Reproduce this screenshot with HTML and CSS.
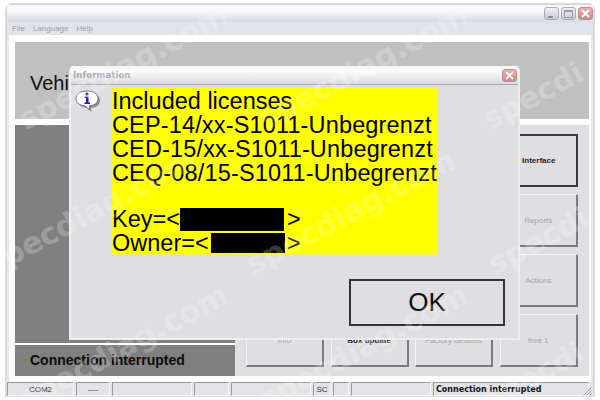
FILE: index.html
```html
<!DOCTYPE html>
<html>
<head>
  <title>Information</title>
  <link rel="stylesheet" href="styles.css">
</head>
<body>
  <div class="window">
    <div class="titlebar">
      <span class="winbtn">
        <svg width="13" height="11" viewBox="0 0 13 11"><rect x="3" y="8" width="5" height="2" fill="#8a8d98"/></svg>
      </span>
      <span class="winbtn">
        <svg width="13" height="11" viewBox="0 0 13 11"><rect x="2.500" y="2.500" width="8" height="7" fill="none" stroke="#9a9da8"/><rect x="2" y="2" width="9" height="2" fill="#9a9da8"/></svg>
      </span>
      <span class="winbtn close">
        <svg width="13" height="11" viewBox="0 0 13 11"><path d="M3 2l7 7M10 2l-7 7" stroke="#fff" stroke-width="1.800"/></svg>
      </span>
    </div>

    <div class="menubar">
      <span>File</span>
      <span>Language</span>
      <span>Help</span>
    </div>

    <div class="content">
      <div class="top-panel">Vehicle</div>
      <div class="lower">
        <div class="left-col">
          <div class="dark-panel"></div>
          <div class="conn-panel">Connection interrupted</div>
        </div>
        <div class="buttons">
          <div class="btn side active">Interface</div>
          <div class="btn side">Reports</div>
          <div class="btn side">Actions</div>
          <div class="btn">Info</div>
          <div class="btn strong">Box update</div>
          <div class="btn">Factory defaults</div>
          <div class="btn">free 1</div>
        </div>
      </div>
    </div>

    <div class="statusbar">
      <span class="cell c1">COM2</span>
      <span class="cell c2">----</span>
      <span class="cell c3"></span>
      <span class="cell c4"></span>
      <span class="cell c5"></span>
      <span class="cell c6">SC</span>
      <span class="cell c7"></span>
      <span class="cell c8"></span>
      <span class="cell c9">Connection interrupted</span>
      <svg class="grip" width="10" height="10" viewBox="0 0 10 10"><path d="M9.500 1.500l-8 8M9.500 4.500l-5 5M9.500 7.500l-2 2" stroke="#a0a0a6"/></svg>
    </div>
  </div>

  <!-- Dialog -->
  <div class="dialog">
    <div class="dialog-title">
      <span class="dialog-name">Information</span>
      <span class="winbtn close">
        <svg width="13" height="11" viewBox="0 0 13 11"><path d="M3 2l7 7M10 2l-7 7" stroke="#fff" stroke-width="1.800"/></svg>
      </span>
    </div>
    <div class="dialog-body">
      <svg class="info-icon" width="26" height="24" viewBox="0 0 26 24">
        <path d="M13 2c6.500 0 11 2.800 11 7.500s-4 7-8.500 7.300l-.5 4-4-4c-5.500-.4-9-3-9-7.300C2 4.800 6.500 2 13 2z" fill="#8d8d96" transform="translate(1 1)"/>
        <path d="M12 1c6.500 0 11 2.800 11 7.500s-4 7-8.500 7.300l-.5 4-4-4c-5.500-.4-9-3-9-7.300C1 3.800 5.500 1 12 1z" fill="#fff" stroke="#55586a" stroke-width=".8"/>
        <circle cx="12" cy="4" r="1.600" fill="#1c1ccc"/>
        <path d="M9.500 6.500h4v6h1.500v1.500H9.500v-1.500H11v-4.500H9.500z" fill="#1c1ccc"/>
      </svg>
      <div class="license-box">
        <div>Included licenses</div>
        <div class="code">CEP-14/xx-S1011-Unbegrenzt</div>
        <div class="code">CED-15/xx-S1011-Unbegrenzt</div>
        <div class="code">CEQ-08/15-S1011-Unbegrenzt</div>
        <div class="blank"></div>
        <div class="redact-line">Key=&lt;<span class="redact key"></span>&gt;</div>
        <div class="redact-line">Owner=&lt;<span class="redact owner"></span>&gt;</div>
      </div>
      <div class="ok-row">
        <div class="ok-btn">OK</div>
      </div>
    </div>
  </div>

  <!-- Watermark -->
  <div class="wm-layer">
    <div class="wm r1 a">specdiag.com</div>
    <div class="wm r1 b">specdiag.com</div>
    <div class="wm r1 c">specdi</div>
    <div class="wm r2 d">specdiag.com</div>
    <div class="wm r2 e">specdiag.com</div>
    <div class="wm r2 f">specdi</div>
    <div class="wm r3 a">specdiag.com</div>
    <div class="wm r3 b">specdiag.com</div>
    <div class="wm r3 c">specdi</div>
  </div>
</body>
</html>
```

FILE: styles.css
```css
html, body {
  margin: 0;
  padding: 0;
  height: 400px;
  overflow: hidden;
  background-color: #fff;
  font-family: "Liberation Sans", Arial, sans-serif;
  color: #000;
}

.window {
  box-sizing: border-box;
  width: 590px;
  height: 394px;
  margin: 3px 0 0 5px;
  border: 2px solid #d8d8de;
  border-bottom: none;
  border-radius: 7px 7px 0 0;
  background-color: #e6e7ee;
  display: flex;
  flex-direction: column;
}

.titlebar {
  height: 17px;
  flex: none;
  display: flex;
  justify-content: flex-end;
  align-items: center;
  gap: 2px;
  background: linear-gradient(#f6f6f9, #fbfbfc 30%, #d8d9e2);
}

.winbtn {
  box-sizing: border-box;
  width: 15px;
  height: 13px;
  border: 1px solid #a9abb8;
  border-radius: 3px;
  background: linear-gradient(#f0f0f4, #c8cad6);
  display: block;
}

.winbtn svg {
  display: block;
}

.winbtn.close {
  border-color: #c09090;
  background: linear-gradient(#e8b0ac, #cc8a86);
}

.menubar {
  height: 13px;
  flex: none;
  display: flex;
  align-items: center;
  gap: 8px;
  padding-left: 5px;
  font-size: 8px;
  color: #9c9ca4;
  background-color: #e0e2ec;
}

.content {
  flex: 1;
  margin: 0 2px;
  padding: 7px 2px 0 6px;
  background-color: #fff;
  display: flex;
  flex-direction: column;
  gap: 6px;
}

.top-panel {
  height: 77px;
  flex: none;
  box-sizing: border-box;
  padding: 30px 0 0 15px;
  background-color: #c0c0c0;
  font-size: 20px;
  color: #111;
}

.lower {
  flex: none;
  height: 251px;
  display: flex;
}

.left-col {
  width: 220px;
  display: flex;
  flex-direction: column;
  gap: 2px;
}

.dark-panel {
  flex: 1;
  background-color: #808080;
}

.conn-panel {
  height: 31px;
  box-sizing: border-box;
  padding: 7px 0 0 15px;
  background-color: #808080;
  font-size: 14px;
  font-weight: bold;
  color: #0c0c0c;
}

.buttons {
  flex: 1;
  box-sizing: border-box;
  padding: 9px 0 0 11px;
  background-color: #dfdfe3;
  display: grid;
  grid-template-columns: repeat(4, 78px);
  grid-auto-rows: 53px;
  column-gap: 6.600px;
  row-gap: 7px;
  align-content: start;
}

.btn {
  box-sizing: border-box;
  display: flex;
  align-items: center;
  justify-content: center;
  border: solid;
  border-color: #f4f4f6 #7c7c80 #7c7c80 #f4f4f6;
  border-width: 1px 2px 2px 1px;
  font-size: 8px;
  color: #a4a4a8;
  background-color: #dfdfe3;
}

.btn.side {
  grid-column: 4;
}

.btn.active {
  border: 2px solid #3a3a3a;
  color: #222;
  font-weight: bold;
}

.btn.strong {
  color: #222;
  font-weight: bold;
}

.statusbar {
  height: 15px;
  flex: none;
  display: flex;
  align-items: flex-start;
  gap: 2px;
  font-size: 8px;
  color: #333;
  background-color: #e3e3e7;
  position: relative;
}

.cell {
  box-sizing: border-box;
  height: 14px;
  border: 1px solid;
  border-color: #9a9a9e #f6f6f8 #f6f6f8 #9a9a9e;
  display: flex;
  align-items: center;
  justify-content: center;
  flex: none;
}

.c1 { width: 67px; }
.c2 { width: 34px; }
.c3 { width: 80px; }
.c4 { width: 35px; }
.c5 { width: 80px; }
.c6 { width: 18px; }
.c7 { width: 16px; }
.c8 { width: 80px; }
.c9 {
  width: 156px;
  justify-content: flex-start;
  padding-left: 2px;
  font-size: 8px;
  font-weight: bold;
  color: #111;
  font-family: "DejaVu Sans", sans-serif;
}

.grip {
  position: absolute;
  right: 1px;
  bottom: 1px;
}

/* Dialog floats over the main window */
.dialog {
  position: absolute;
  left: 69px;
  top: 66px;
  width: 451px;
  height: 274px;
  box-sizing: border-box;
  border: 2px solid #eeeef2;
  border-top: none;
  border-radius: 5px 5px 0 0;
  display: flex;
  flex-direction: column;
}

.dialog-title {
  height: 18px;
  flex: none;
  display: flex;
  align-items: center;
  justify-content: space-between;
  padding: 0 1px 0 2px;
  background: linear-gradient(#f4f4f8, #fbfbfc 30%, #d8d9e2);
  border-bottom: 1px solid #a8a8b0;
}

.dialog-name {
  font-size: 8.500px;
  font-weight: bold;
  letter-spacing: .1px;
  color: #a8a8b0;
  font-family: "DejaVu Sans", sans-serif;
}

.dialog-body {
  flex: 1;
  background-color: #dfdfe3;
  display: grid;
  grid-template-columns: 41px 326px;
  grid-template-rows: 167px 1fr;
  padding-top: 3px;
}

.info-icon {
  margin: 2px 0 0 4px;
}

.license-box {
  box-sizing: border-box;
  padding-top: 1px;
  background-color: #ff0;
  font-size: 23.500px;
  line-height: 24px;
  white-space: nowrap;
}

.code {
  letter-spacing: .15px;
}

.blank {
  height: 22px;
}

.redact-line {
  display: flex;
  align-items: center;
  height: 24px;
}

.redact {
  background-color: #000;
  display: block;
}

.redact.key {
  width: 104px;
  height: 23px;
  margin: 0 3px 0 0;
}

.redact.owner {
  width: 74px;
  height: 20px;
  margin: 0 2px 0 2px;
}

.ok-row {
  grid-column: 1 / 3;
  position: relative;
}

.ok-btn {
  position: absolute;
  left: 278px;
  top: 24px;
  width: 156px;
  height: 47px;
  box-sizing: border-box;
  border: 2px solid #333;
  display: flex;
  align-items: center;
  justify-content: center;
  font-size: 26px;
  color: #111;
}

/* Watermark */
.wm-layer {
  position: absolute;
  left: 0;
  top: 0;
  width: 600px;
  height: 400px;
  overflow: hidden;
}

.wm {
  position: absolute;
  font-family: "DejaVu Sans", sans-serif;
  font-weight: bold;
  font-size: 30px;
  line-height: 30px;
  color: #fff;
  opacity: .22;
  white-space: nowrap;
  transform: rotate(-28deg);
  transform-origin: left bottom;
}

.r1 { top: 105px; }
.r2 { top: 250px; }
.r3 { top: 385px; }
.a { left: 28px; }
.b { left: 268px; }
.c { left: 492px; }
.d { left: -5px; }
.e { left: 255px; }
.f { left: 497px; }
```
